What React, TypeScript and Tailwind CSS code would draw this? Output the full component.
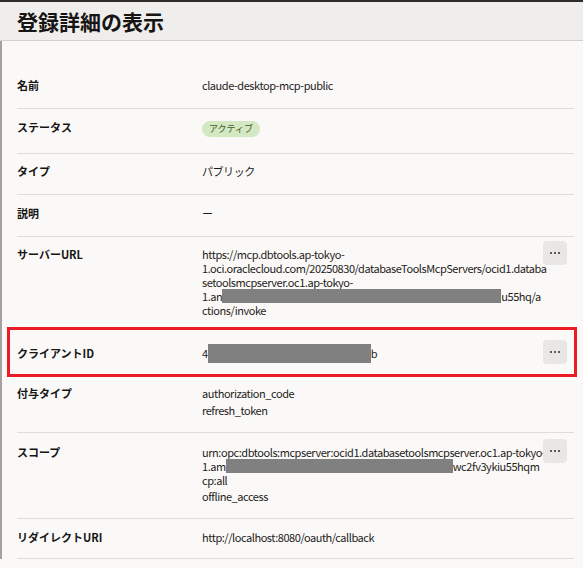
import React from 'react';

// Detail panel for a registered OAuth client of the MCP server
const FONT = { fontFamily: '"Noto Sans CJK JP", "Noto Sans", sans-serif' };

const MenuButton: React.FC = () => (
  <button
    type="button"
    className="-mt-[6px] mr-[7px] ml-auto flex h-[24px] w-[24px] shrink-0 items-center justify-center gap-[2px] rounded-[4px] bg-[#e9e7e5]"
  >
    <span className="h-[2px] w-[2px] rounded-full bg-[#2f2e2c]" />
    <span className="h-[2px] w-[2px] rounded-full bg-[#2f2e2c]" />
    <span className="h-[2px] w-[2px] rounded-full bg-[#2f2e2c]" />
  </button>
);

// masked portion of an identifier
const Redacted: React.FC<{ w: number; tall?: boolean }> = ({ w, tall }) => (
  <span
    className={`inline-block shrink-0 bg-[#808080] ${tall ? '-my-[3px] h-[19px]' : 'h-[14px]'}`}
    style={{ width: w }}
  />
);

interface RowProps {
  label: string;
  className?: string;
  menu?: boolean;
  children: React.ReactNode;
}

const Row: React.FC<RowProps> = ({ label, className, menu, children }) => (
  <div className={`flex border-b border-[#dfdddb] ${className ?? 'pt-[10px] pb-[16px]'}`}>
    <div className="w-[185px] shrink-0 text-[11px] font-bold leading-[14px] text-[#161513]">{label}</div>
    <div className="w-[338px] whitespace-nowrap text-[11px] leading-[14px] tracking-[-0.45px] text-[#1d1c1a]">
      {children}
    </div>
    {menu && <MenuButton />}
  </div>
);

export default function App() {
  return (
    <div className="h-[568px] w-[583px] overflow-hidden bg-[#fbf9f8]" style={FONT}>
      <div className="h-[2px] bg-[#2d2c2b]" />
      <div className="flex h-[39px] items-center border-b border-[#d3d1cf] bg-[#efeeec] pl-[17px]">
        <h1 className="text-[21px] font-bold leading-none text-[#161513]">登録詳細の表示</h1>
      </div>

      <div className="border-l-2 border-[#a3a2a0] pt-[26px] pl-[15px] pr-[9px]">
        <Row label="名前" className="pt-[11px] pb-[16px]">
          claude-desktop-mcp-public
        </Row>

        <Row label="ステータス" className="pt-[11px] pb-[16px]">
          <span className="-mt-[1px] inline-flex h-[16px] items-center rounded-full bg-[#d4e8c2] px-[7px] text-[9px] tracking-normal text-[#3b5a2a]">
            アクティブ
          </span>
        </Row>

        <Row label="タイプ" className="pt-[10px] pb-[16px]">
          パブリック
        </Row>

        <Row label="説明" className="pt-[11px] pb-[16px]">
          ー
        </Row>

        <Row label="サーバーURL" menu className="pt-[10px] pb-[10px]">
          <div>https://mcp.dbtools.ap-tokyo-</div>
          <div>1.oci.oraclecloud.com/20250830/databaseToolsMcpServers/ocid1.databa</div>
          <div>setoolsmcpserver.oc1.ap-tokyo-</div>
          <div className="flex h-[14px] items-center">
            1.an
            <Redacted w={279} />
            u55hq/a
          </div>
          <div>ctions/invoke</div>
        </Row>

        <div className="relative">
          <Row label="クライアントID" menu className="pt-[18px] pb-[11px]">
            <div className="flex h-[14px] items-center">
              4
              <Redacted w={163} tall />b
            </div>
          </Row>
          <div className="pointer-events-none absolute -top-[1px] -bottom-[1px] -left-[10px] -right-[3px] border-[3px] border-[#ec1c24]" />
        </div>

        <Row label="付与タイプ" className="pt-[10px] pb-[15px]">
          <div className="flex flex-col gap-[3px]">
            <div>authorization_code</div>
            <div>refresh_token</div>
          </div>
        </Row>

        <Row label="スコープ" menu className="pt-[12px] pb-[15px]">
          <div className="flex flex-col gap-[2px]">
            <div>
              <div>urn:opc:dbtools:mcpserver:ocid1.databasetoolsmcpserver.oc1.ap-tokyo-</div>
              <div className="flex h-[14px] items-center">
                1.am
                <Redacted w={227} />
                wc2fv3ykiu55hqm
              </div>
              <div>cp:all</div>
            </div>
            <div>offline_access</div>
          </div>
        </Row>

        <Row label="リダイレクトURI" className="pt-[11px] pb-[14px]">
          http://localhost:8080/oauth/callback
        </Row>
      </div>
    </div>
  );
}
